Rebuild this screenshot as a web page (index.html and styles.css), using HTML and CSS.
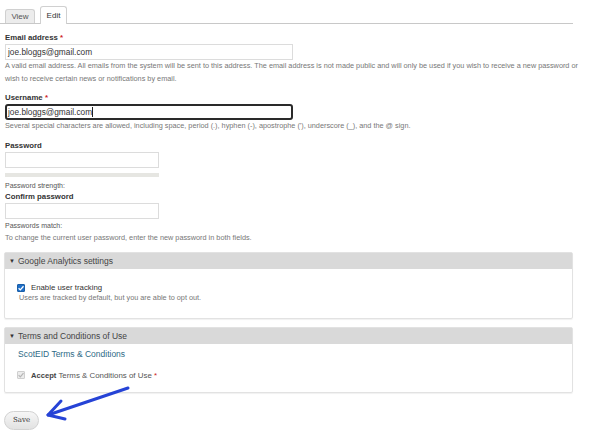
FILE: index.html
```html
<!DOCTYPE html>
<html>
<head>
<meta charset="utf-8">
<link rel="stylesheet" href="styles.css">
</head>
<body>
<div class="page">
  <ul class="tabs">
    <li class="tab">View</li>
    <li class="tab active">Edit</li>
  </ul>

  <div class="form">
    <div class="field first">
      <div class="label">Email address <span class="req">*</span></div>
      <div class="input wide">joe.bloggs@gmail.com</div>
      <div class="desc">A valid email address. All emails from the system will be sent to this address. The email address is not made public and will only be used if you wish to receive a new password or wish to receive certain news or notifications by email.</div>
    </div>

    <div class="field">
      <div class="label">Username <span class="req">*</span></div>
      <div class="input wide focus">joe.bloggs@gmail.com<span class="caret"></span></div>
      <div class="desc">Several special characters are allowed, including space, period (.), hyphen (-), apostrophe ('), underscore (_), and the @ sign.</div>
    </div>

    <div class="field">
      <div class="label">Password</div>
      <div class="input short"></div>
      <div class="strength"></div>
      <div class="plain strength-text">Password strength:</div>
      <div class="label confirm">Confirm password</div>
      <div class="input short"></div>
      <div class="plain match">Passwords match:</div>
      <div class="desc single">To change the current user password, enter the new password in both fields.</div>
    </div>

    <div class="fieldset ga">
      <div class="legend"><span class="tri">&#9660;</span>Google Analytics settings</div>
      <div class="fs-body">
        <div class="check-row"><span class="cb checked"><svg viewBox="0 0 8 8" width="8" height="8"><path d="M1.6 4.2 L3.3 5.9 L6.5 2.2" fill="none" stroke="#fff" stroke-width="1.3"/></svg></span><span>Enable user tracking</span></div>
        <div class="desc indent">Users are tracked by default, but you are able to opt out.</div>
      </div>
    </div>

    <div class="fieldset terms">
      <div class="legend"><span class="tri">&#9660;</span>Terms and Conditions of Use</div>
      <div class="fs-body">
        <div class="link">ScotEID Terms &amp; Conditions</div>
        <div class="check-row accept"><span class="cb disabled"><svg viewBox="0 0 8 8" width="8" height="8"><path d="M1.6 4.2 L3.3 5.9 L6.5 2.2" fill="none" stroke="#b5b5b5" stroke-width="1.2"/></svg></span><span><b>Accept</b> Terms &amp; Conditions of Use <span class="req">*</span></span></div>
      </div>
    </div>

    <div class="actions"><span class="btn">Save</span></div>
  </div>

  <svg class="arrow" width="592" height="444" viewBox="0 0 592 444">
    <path d="M128 388 Q95 399 48 415" fill="none" stroke="#2643d6" stroke-width="3" stroke-linecap="round"/>
    <path d="M61 401 L48 415 L65 419" fill="none" stroke="#2643d6" stroke-width="3" stroke-linecap="round" stroke-linejoin="round"/>
  </svg>
</div>
</body>
</html>
```

FILE: styles.css
```css
html, body {
  margin: 0;
  padding: 0;
  background: #fff;
}
body {
  font-family: "Liberation Sans", Arial, sans-serif;
  color: #333;
}
.page {
  position: relative;
  width: 592px;
  height: 444px;
  overflow: hidden;
}
.tabs {
  list-style: none;
  margin: 0;
  padding: 0 0 0 5px;
  width: 568px;
  height: 23px;
  border-bottom: 1px solid #c8c8c8;
  display: flex;
  align-items: flex-end;
  gap: 5px;
}
.tab {
  box-sizing: border-box;
  height: 14px;
  width: 30px;
  border: 1px solid #d0d0d0;
  border-bottom: none;
  border-radius: 3px 3px 0 0;
  background: #ececec;
  color: #555;
  font-size: 8px;
  line-height: 13px;
  text-align: center;
}
.tab.active {
  height: 18px;
  width: 27px;
  margin-bottom: -1px;
  background: #fff;
  color: #333;
  line-height: 17px;
}
.form {
  padding-left: 5px;
}
.field.first {
  margin-top: 8px;
}
.field {
  margin-top: 7px;
}
.label {
  font-weight: bold;
  font-size: 7.8px;
  line-height: 11px;
  color: #333;
}
.req {
  color: #c22;
}
.input {
  box-sizing: border-box;
  margin-top: 1px;
  height: 16px;
  border: 1px solid #dcdcdc;
  font-size: 8.3px;
  line-height: 14px;
  padding-left: 2px;
  color: #333;
  background: #fff;
}
.input.wide {
  width: 288px;
}
.input.short {
  width: 154px;
}
.input.focus {
  border: 2px solid #2a2a2a;
  border-radius: 3px;
  line-height: 12px;
  padding-left: 1px;
}
.caret {
  display: inline-block;
  width: 1px;
  height: 10px;
  background: #222;
  vertical-align: -2px;
}
.desc {
  font-size: 7.3px;
  line-height: 12.5px;
  color: #777;
  width: 574px;
}
.desc.single {
  margin-top: 1px;
  line-height: 12px;
}
.strength {
  margin-top: 5px;
  width: 154px;
  height: 4px;
  background: #e6e6e2;
}
.plain {
  font-size: 7px;
  line-height: 11px;
  color: #555;
}
.strength-text {
  margin-top: 3px;
}
.match {
  margin-top: 1px;
}
.fieldset {
  box-sizing: border-box;
  width: 569px;
  margin-left: -1px;
  border: 1px solid #e2e2e2;
  border-radius: 2px;
  box-shadow: 0 1px 1px rgba(0,0,0,0.06);
}
.ga {
  margin-top: 8px;
  height: 67px;
}
.terms {
  margin-top: 8px;
  height: 66px;
}
.legend {
  height: 16px;
  background: #d9d9d9;
  font-size: 8.5px;
  line-height: 16px;
  color: #444;
  padding-left: 4px;
}
.tri {
  font-size: 6px;
  margin-right: 3px;
  vertical-align: 1px;
  color: #333;
}
.fs-body {
  padding-left: 12px;
}
.ga .fs-body {
  padding-top: 14px;
}
.check-row {
  display: flex;
  align-items: center;
  font-size: 7.8px;
  line-height: 10px;
  color: #333;
}
.cb {
  box-sizing: border-box;
  flex: none;
  width: 8px;
  height: 8px;
  border-radius: 1px;
  margin-right: 6px;
  display: flex;
  align-items: center;
  justify-content: center;
}
.cb.checked {
  background: #1f6fc8;
  border: 1px solid #1a5fa8;
}
.cb svg {
  flex: none;
  margin: -1px;
}
.cb.disabled {
  background: #ececec;
  border: 1px solid #cfcfcf;
}
.desc.indent {
  padding-left: 2px;
  line-height: 10px;
  width: auto;
}
.terms .fs-body {
  padding-top: 5px;
  padding-left: 13px;
}
.link {
  font-size: 8.5px;
  line-height: 11px;
  color: #2d6a86;
}
.accept {
  margin-top: 10px;
  line-height: 11px;
  color: #555;
  font-size: 7.9px;
  margin-left: -1px;
}
.accept b {
  color: #444;
  font-size: 7.6px;
}
.actions {
  margin-top: 15px;
}
.btn {
  display: inline-block;
  box-sizing: border-box;
  margin-left: -1px;
  width: 35px;
  height: 19px;
  border: 1px solid #d2d2d2;
  border-radius: 10px;
  background: linear-gradient(#f6f6f6, #e2e2e2);
  font-family: "DejaVu Serif", "Liberation Serif", serif;
  font-size: 7px;
  line-height: 17px;
  text-align: center;
  color: #333;
}
.arrow {
  position: absolute;
  left: 0;
  top: 0;
  pointer-events: none;
}
```
